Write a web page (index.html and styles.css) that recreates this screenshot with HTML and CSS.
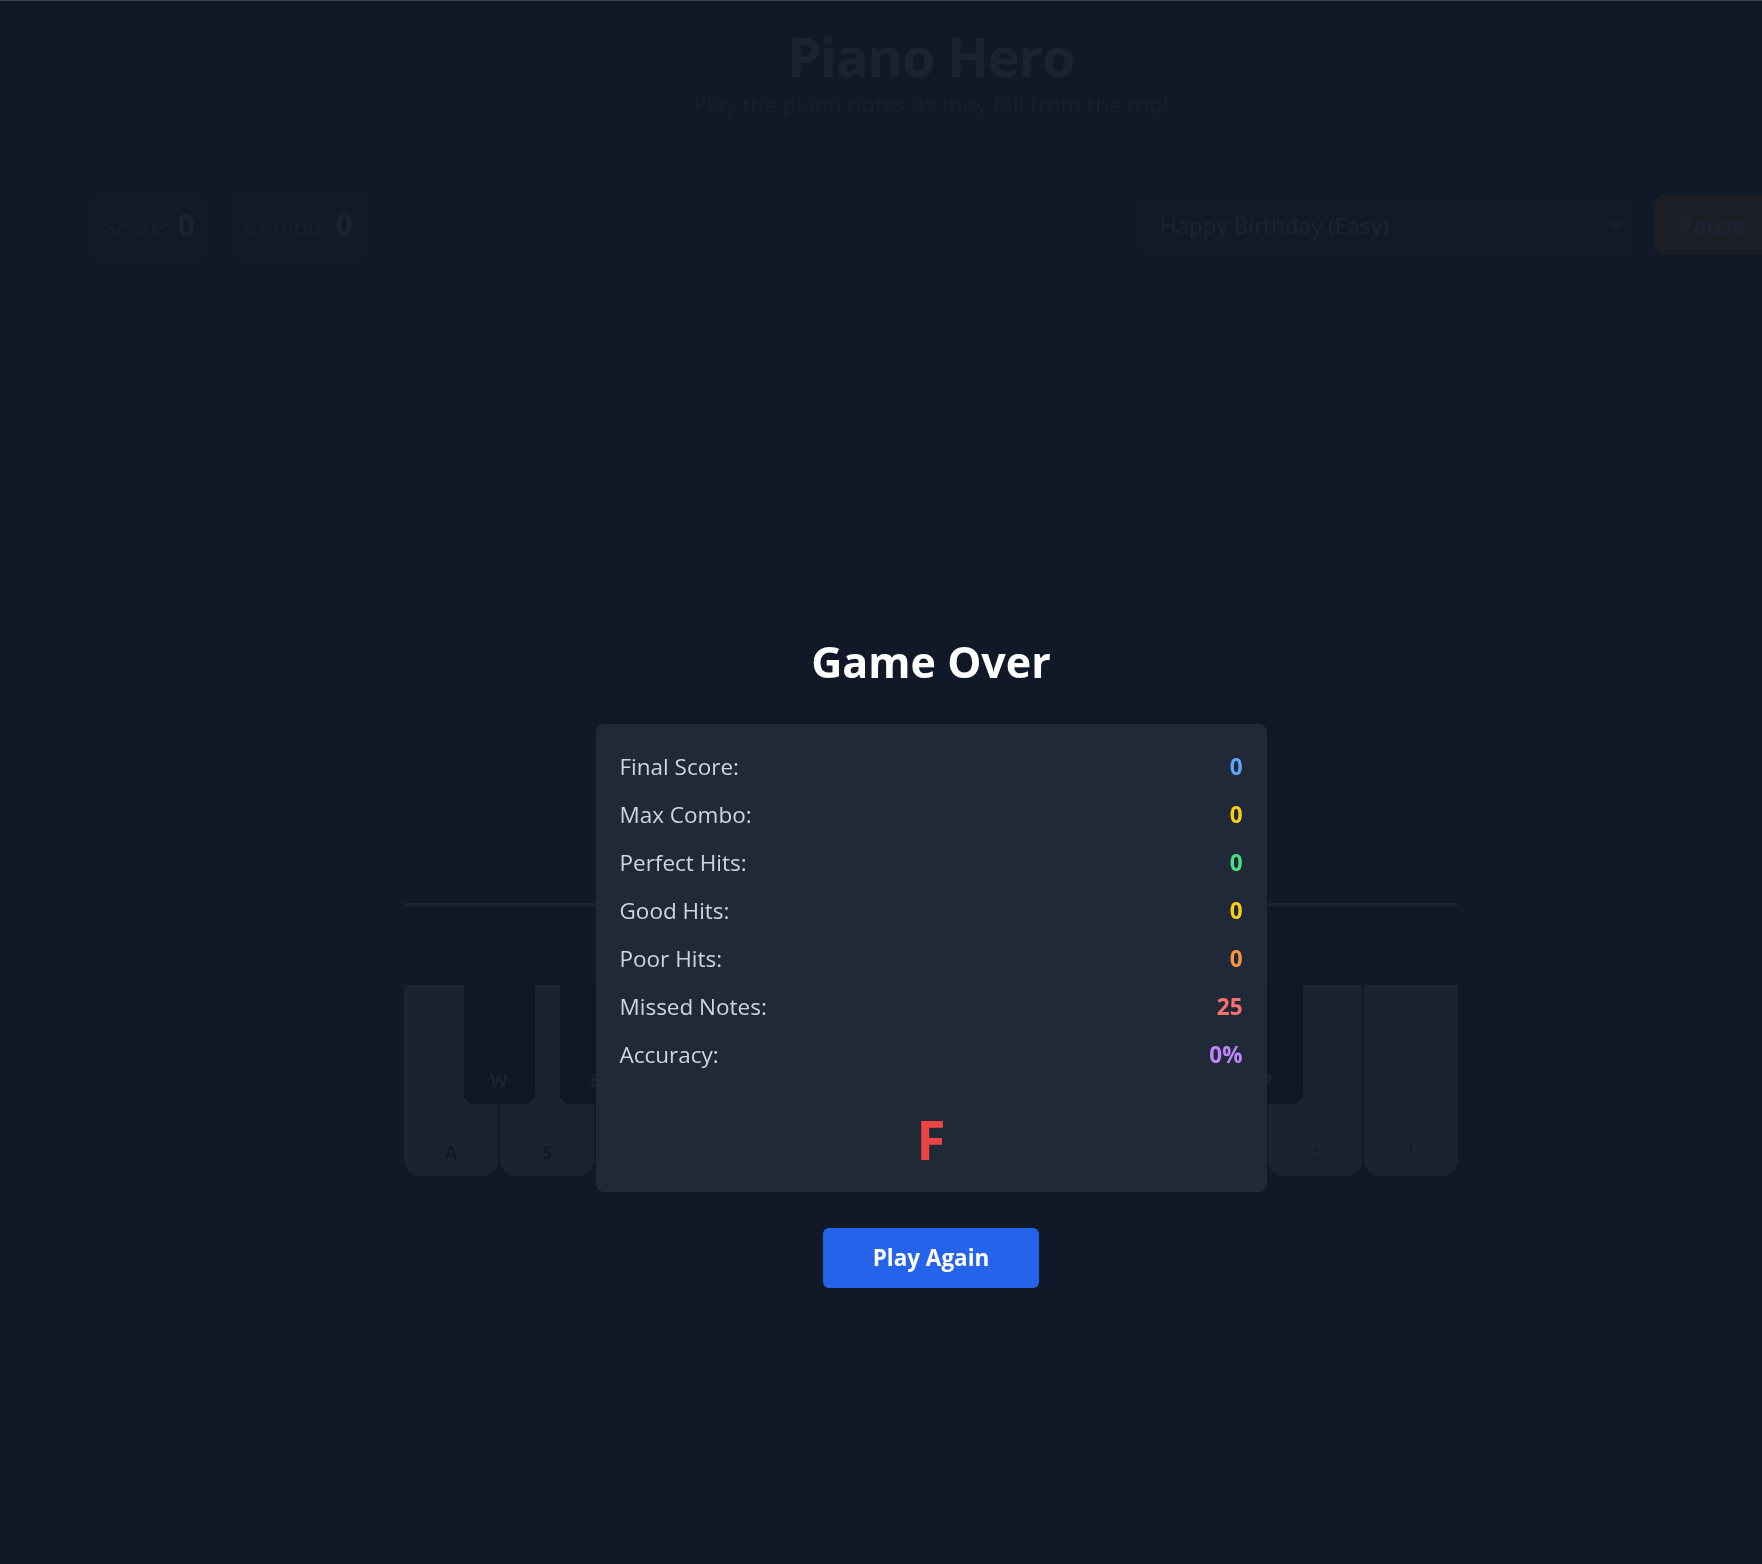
FILE: index.html
```html
<!DOCTYPE html>
<html lang="en">
<head>
<meta charset="utf-8">
<title>Piano Hero</title>
<link rel="stylesheet" href="styles.css">
</head>
<body>
<div class="topline"></div>
<div class="page">
  <div class="behind">
    <header class="header">
      <h1 class="title">Piano Hero</h1>
      <p class="subtitle">Play the piano notes as they fall from the top!</p>
    </header>

    <main class="game">
      <div class="toolbar">
        <div class="stats">
          <div class="stat"><span class="stat-label">Score:</span><span class="stat-value">0</span></div>
          <div class="stat"><span class="stat-label">Combo:</span><span class="stat-value">0</span></div>
        </div>
        <div class="controls">
          <div class="select">
            <span>Happy Birthday (Easy)</span>
            <svg class="chevron" width="14" height="10" viewBox="0 0 14 10"><path d="M1.5 2 L7 7.5 L12.5 2" fill="none" stroke="currentColor" stroke-width="2"/></svg>
          </div>
          <button class="pause">Pause</button>
        </div>
      </div>

      <div class="playfield">
        <div class="piano">
          <div class="hitline"></div>
          <div class="keyboard">
            <div class="white-keys">
              <div class="wkey"><span>A</span></div>
              <div class="wkey"><span>S</span></div>
              <div class="wkey"><span>D</span></div>
              <div class="wkey"><span>F</span></div>
              <div class="wkey"><span>G</span></div>
              <div class="wkey"><span>H</span></div>
              <div class="wkey"><span>J</span></div>
              <div class="wkey"><span>K</span></div>
              <div class="wkey"><span>L</span></div>
              <div class="wkey"><span>;</span></div>
              <div class="wkey"><span>'</span></div>
            </div>
            <div class="bkey" style="left:59.5px"><span>W</span></div>
            <div class="bkey" style="left:155.5px"><span>E</span></div>
            <div class="bkey" style="left:347.5px"><span>T</span></div>
            <div class="bkey" style="left:443.5px"><span>Y</span></div>
            <div class="bkey" style="left:539.5px"><span>U</span></div>
            <div class="bkey" style="left:731.5px"><span>O</span></div>
            <div class="bkey" style="left:827.5px"><span>P</span></div>
          </div>
        </div>
      </div>
    </main>
  </div>

  <div class="overlay">
    <h2 class="over-title">Game Over</h2>
    <div class="card">
      <div class="rows">
        <div class="row"><span class="label">Final Score:</span><span class="val blue">0</span></div>
        <div class="row"><span class="label">Max Combo:</span><span class="val yellow">0</span></div>
        <div class="row"><span class="label">Perfect Hits:</span><span class="val green">0</span></div>
        <div class="row"><span class="label">Good Hits:</span><span class="val yellow">0</span></div>
        <div class="row"><span class="label">Poor Hits:</span><span class="val orange">0</span></div>
        <div class="row"><span class="label">Missed Notes:</span><span class="val red">25</span></div>
        <div class="row"><span class="label">Accuracy:</span><span class="val purple">0%</span></div>
      </div>
      <div class="grade">F</div>
    </div>
    <button class="again">Play Again</button>
  </div>
</div>
</body>
</html>
```

FILE: styles.css
```css
html, body {
  margin: 0;
  padding: 0;
  overflow: hidden;
  background: #111827;
}

body {
  font-family: "Open Sans", "Noto Sans", sans-serif;
  color: #ffffff;
  width: 1762px;
  height: 1564px;
}

.topline {
  height: 1px;
  background: #3a3d42;
}

.page {
  position: relative;
  width: 1862px;
  height: 1563px;
}

/* the game seen through the dim backdrop */
.behind {
  opacity: 0.05;
}

/* ---------- header ---------- */
.header {
  text-align: center;
  padding-top: 22px;
}

.title {
  margin: 0;
  font-size: 54px;
  line-height: 66px;
  font-weight: 700;
  color: #ffffff;
  letter-spacing: -1px;
}

.subtitle {
  margin: 0;
  font-size: 22.5px;
  line-height: 31.5px;
  color: #9ca3af;
}

/* ---------- game panel ---------- */
.game {
  margin: 44px 68px 0 68px;
  background: #1f2937;
  border-radius: 10px;
  padding-top: 28px;
}

.toolbar {
  display: flex;
  justify-content: space-between;
  align-items: center;
  padding: 0 24px;
  height: 65px;
}

.stats {
  display: flex;
  gap: 25px;
}

.stat {
  display: flex;
  align-items: baseline;
  gap: 8px;
  height: 65px;
  box-sizing: border-box;
  padding: 14px 12px 0 12px;
  background: #374151;
  border-radius: 8px;
}

.stat-label {
  font-size: 23px;
  line-height: 36px;
  color: #9ca3af;
}

.stat-value {
  font-size: 30px;
  line-height: 36px;
  font-weight: 700;
  color: #ffffff;
}

.controls {
  display: flex;
  align-items: center;
  gap: 22px;
}

.select {
  width: 492px;
  height: 55px;
  box-sizing: border-box;
  display: flex;
  align-items: center;
  justify-content: space-between;
  padding: 0 8px 0 18px;
  background: #374151;
  border: 1px solid #4b5563;
  border-radius: 8px;
  font-size: 22.5px;
  color: #ffffff;
}

.chevron {
  color: #d1d5db;
}

.pause {
  height: 60px;
  padding: 0 24px;
  border: none;
  border-radius: 8px;
  background: #eab308;
  color: #ffffff;
  font-family: inherit;
  font-size: 22.5px;
  font-weight: 700;
}

/* ---------- playfield ---------- */
.playfield {
  margin-top: 52px;
  height: 873px;
  background: #1f2937;
  border-radius: 0 0 10px 10px;
  display: flex;
  flex-direction: column;
  align-items: center;
  justify-content: flex-end;
  padding-bottom: 7px;
  box-sizing: border-box;
}

.piano {
  width: 1054px;
}

.hitline {
  height: 3px;
  background: #e5e7eb;
  margin-bottom: 79px;
}

.keyboard {
  position: relative;
  height: 191px;
}

.white-keys {
  display: flex;
  gap: 2px;
  height: 100%;
}

.wkey {
  flex: 1;
  background: #f3f4f6;
  border-radius: 0 0 16px 16px;
  display: flex;
  align-items: flex-end;
  justify-content: center;
  padding-bottom: 12px;
  box-sizing: border-box;
  font-size: 18px;
  font-weight: 700;
  color: #1f2937;
}

.bkey {
  position: absolute;
  top: 0;
  width: 71px;
  height: 119px;
  background: #000000;
  border-radius: 0 0 10px 10px;
  display: flex;
  align-items: flex-end;
  justify-content: center;
  padding-bottom: 12px;
  box-sizing: border-box;
  font-size: 18px;
  font-weight: 700;
  color: #e5e7eb;
}

/* ---------- overlay ---------- */
.overlay {
  position: absolute;
  inset: 0;
  display: flex;
  flex-direction: column;
  align-items: center;
  padding-top: 635px;
  box-sizing: border-box;
}

.over-title {
  margin: 0 0 36px 0;
  font-size: 43px;
  line-height: 52px;
  font-weight: 700;
  color: #ffffff;
}

.card {
  width: 671px;
  box-sizing: border-box;
  background: #1f2937;
  border-radius: 8px;
  padding: 27px 24px 26px 24px;
}

.rows {
  display: flex;
  flex-direction: column;
  gap: 16.5px;
}

.row {
  display: flex;
  justify-content: space-between;
  font-size: 22.5px;
  line-height: 31.5px;
}

.label {
  color: #d1d5db;
}

.val {
  font-weight: 700;
}

.blue { color: #60a5fa; }
.yellow { color: #facc15; }
.green { color: #4ade80; }
.orange { color: #fb923c; }
.red { color: #f87171; }
.purple { color: #c084fc; }

.grade {
  margin-top: 42px;
  text-align: center;
  font-size: 53px;
  line-height: 53px;
  font-weight: 700;
  color: #ef4444;
}

.again {
  margin-top: 36px;
  width: 216px;
  height: 60px;
  border: none;
  border-radius: 6px;
  background: #2563eb;
  color: #ffffff;
  font-family: inherit;
  font-size: 22.5px;
  font-weight: 700;
}
```
